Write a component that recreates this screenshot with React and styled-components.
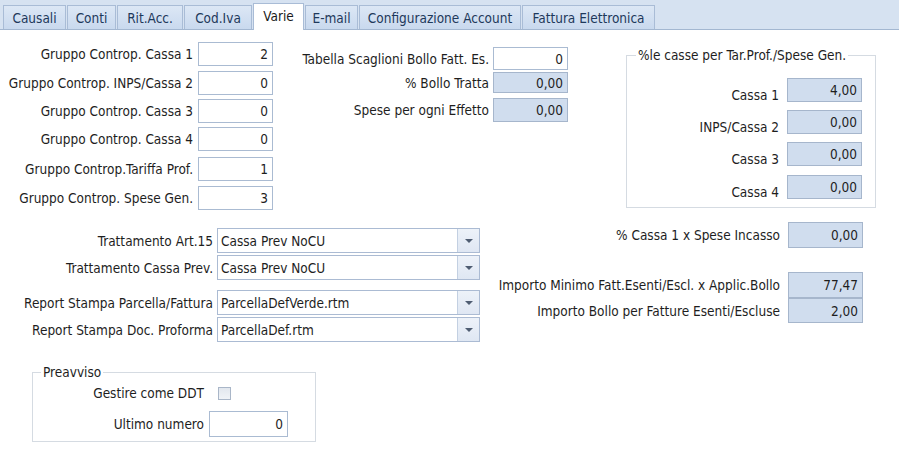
import React from "react";
import styled, { createGlobalStyle } from "styled-components";

const GlobalStyle = createGlobalStyle`
  html, body {
    margin: 0;
    padding: 0;
    background: #fff;
  }
  body {
    font-family: "DejaVu Sans Condensed", "DejaVu Sans", sans-serif;
    font-stretch: condensed;
    font-size: 13.5px;
    color: #1e1e1e;
  }
`;

const Page = styled.div`
  width: 899px;
  height: 450px;
  overflow: hidden;
  background: #fff;
  display: flex;
  flex-direction: column;
`;

const TabBar = styled.div`
  height: 30px;
  box-sizing: border-box;
  background: #d6e2f1;
  border-bottom: 1px solid #a3b7d1;
  display: flex;
  align-items: flex-end;
  padding-left: 3px;
  gap: 1px;
`;

const Tab = styled.div`
  width: ${({ $w }) => $w}px;
  height: ${({ $active }) => ($active ? 27 : 24)}px;
  margin-bottom: ${({ $active }) => ($active ? -1 : 0)}px;
  box-sizing: border-box;
  border: 1px solid #a9bcd6;
  border-bottom: none;
  background: ${({ $active }) =>
    $active ? "#fff" : "linear-gradient(#dce7f5, #c9d9ee)"};
  color: ${({ $active }) => ($active ? "#1a1a1a" : "#1e395b")};
  display: flex;
  align-items: ${({ $active }) => ($active ? "flex-start" : "center")};
  padding-top: ${({ $active }) => ($active ? 4 : 0)}px;
  justify-content: center;
  white-space: nowrap;
`;

const Section = styled.div`
  display: flex;
  align-items: flex-start;
`;

const Column = styled.div`
  display: flex;
  flex-direction: column;
  margin-top: ${({ $mt }) => $mt || 0}px;
  margin-left: ${({ $ml }) => $ml || 0}px;
`;

const Row = styled.div`
  display: flex;
  align-items: center;
  height: ${({ $h }) => $h || 24}px;
  margin-top: ${({ $mt }) => $mt || 0}px;
`;

const Label = styled.div`
  width: ${({ $w }) => $w}px;
  margin-right: ${({ $gap }) => $gap}px;
  padding-top: ${({ $dy }) => $dy || 0}px;
  text-align: right;
  white-space: nowrap;
  flex-shrink: 0;
`;

const ValueBox = styled.div`
  width: ${({ $w }) => $w || 75}px;
  height: 100%;
  box-sizing: border-box;
  border: 1px solid ${({ $disabled }) => ($disabled ? "#a6b6cc" : "#aabbd2")};
  background: ${({ $disabled }) => ($disabled ? "#d0ddee" : "#fff")};
  display: flex;
  align-items: center;
  justify-content: flex-end;
  padding-right: 4px;
`;

const Combo = styled.div`
  width: 263px;
  height: 100%;
  box-sizing: border-box;
  border: 1px solid #abbbd3;
  background: #fff;
  display: flex;
  align-items: stretch;
`;

const ComboText = styled.div`
  flex: 1;
  display: flex;
  align-items: center;
  padding-left: 3px;
  white-space: nowrap;
`;

const ComboButton = styled.div`
  width: 21px;
  border-left: 1px solid #c3d0e2;
  background: linear-gradient(#edf2f9, #dfe7f3);
  display: flex;
  align-items: center;
  justify-content: center;
`;

const Arrow = styled.div`
  width: 0;
  height: 0;
  border-left: 4px solid transparent;
  border-right: 4px solid transparent;
  border-top: 4px solid #4f5d72;
`;

const Group = styled.fieldset`
  box-sizing: border-box;
  width: ${({ $w }) => $w}px;
  height: ${({ $h }) => $h}px;
  margin: ${({ $mt }) => $mt}px 0 0 ${({ $ml }) => $ml}px;
  padding: 0;
  border: 1px solid #d5dbe2;
  min-width: 0;
`;

const Legend = styled.legend`
  margin-left: ${({ $ml }) => $ml}px;
  padding: 0 2px;
  line-height: 16px;
  white-space: nowrap;
`;

const Check = styled.div`
  width: 13px;
  height: 13px;
  box-sizing: border-box;
  margin-left: 14px;
  border: 1px solid #a9b6c8;
  background: linear-gradient(#e2e7ee, #f0f3f7);
`;

const tabs = [
  ["Causali", 63],
  ["Conti", 49],
  ["Rit.Acc.", 66],
  ["Cod.Iva", 68],
  ["Varie", 51],
  ["E-mail", 53],
  ["Configurazione Account", 162],
  ["Fattura Elettronica", 133],
];

const gruppi = [
  ["Gruppo Controp. Cassa 1", "2", 12],
  ["Gruppo Controp. INPS/Cassa 2", "0", 5],
  ["Gruppo Controp. Cassa 3", "0", 4],
  ["Gruppo Controp. Cassa 4", "0", 4],
  ["Gruppo Controp.Tariffa Prof.", "1", 6],
  ["Gruppo Controp. Spese Gen.", "3", 5],
];

const bollo = [
  ["Tabella Scaglioni Bollo Fatt. Es.", "0", 0, 23, false],
  ["% Bollo Tratta", "0,00", 2, 21, true],
  ["Spese per ogni Effetto", "0,00", 5, 24, true],
];

const casse = [
  ["Cassa 1", "4,00", 15],
  ["INPS/Cassa 2", "0,00", 8],
  ["Cassa 3", "0,00", 8],
  ["Cassa 4", "0,00", 9],
];

const combos = [
  ["Trattamento Art.15", "Cassa Prev NoCU", 18],
  ["Trattamento Cassa Prev.", "Cassa Prev NoCU", 2],
  ["Report Stampa Parcella/Fattura", "ParcellaDefVerde.rtm", 10],
  ["Report Stampa Doc. Proforma", "ParcellaDef.rtm", 2],
];

const importi = [
  ["% Cassa 1 x Spese Incasso", "0,00", 12, 26],
  ["Importo Minimo Fatt.Esenti/Escl. x Applic.Bollo", "77,47", 24, 26],
  ["Importo Bollo per Fatture Esenti/Escluse", "2,00", 0, 25],
];

const App = () => {
  return (
    <Page>
      <GlobalStyle />
      <TabBar>
        {tabs.map(([name, w]) => (
          <Tab key={name} $w={w} $active={name === "Varie"}>
            {name}
          </Tab>
        ))}
      </TabBar>

      <Section>
        <Column>
          {gruppi.map(([label, value, mt]) => (
            <Row key={label} $mt={mt}>
              <Label $w={193} $gap={5}>{label}</Label>
              <ValueBox>{value}</ValueBox>
            </Row>
          ))}
        </Column>

        <Column $mt={17} $ml={24}>
          {bollo.map(([label, value, mt, h, disabled]) => (
            <Row key={label} $mt={mt} $h={h}>
              <Label $w={192} $gap={4}>{label}</Label>
              <ValueBox $disabled={disabled}>{value}</ValueBox>
            </Row>
          ))}
        </Column>

        <Group $w={250} $h={161} $mt={17} $ml={58}>
          <Legend $ml={9}>%le casse per Tar.Prof./Spese Gen.</Legend>
          {casse.map(([label, value, mt]) => (
            <Row key={label} $mt={mt}>
              <Label $w={152} $gap={8} $dy={10}>{label}</Label>
              <ValueBox $disabled>{value}</ValueBox>
            </Row>
          ))}
        </Group>
      </Section>

      <Section>
        <Column>
          {combos.map(([label, value, mt]) => (
            <Row key={label} $mt={mt} $h={25}>
              <Label $w={213} $gap={4}>{label}</Label>
              <Combo>
                <ComboText>{value}</ComboText>
                <ComboButton>
                  <Arrow />
                </ComboButton>
              </Combo>
            </Row>
          ))}
        </Column>

        <Column>
          {importi.map(([label, value, mt, h]) => (
            <Row key={label} $mt={mt} $h={h}>
              <Label $w={300} $gap={8}>{label}</Label>
              <ValueBox $disabled>{value}</ValueBox>
            </Row>
          ))}
        </Column>
      </Section>

      <Group $w={284} $h={78} $mt={22} $ml={32}>
        <Legend $ml={8}>Preavviso</Legend>
        <Row $mt={5} $h={16}>
          <Label $w={171} $gap={0}>Gestire come DDT</Label>
          <Check />
        </Row>
        <Row $mt={10} $h={26}>
          <Label $w={171} $gap={5}>Ultimo numero</Label>
          <ValueBox $w={79}>0</ValueBox>
        </Row>
      </Group>
    </Page>
  );
};

export default App;
